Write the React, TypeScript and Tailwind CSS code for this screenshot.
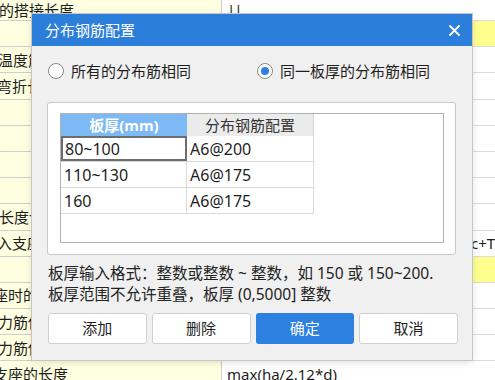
import React from "react";

const font = { fontFamily: '"Noto Sans", "Noto Sans CJK SC", sans-serif' };

type Row = { h: string; a?: string; aShift?: string; b?: React.ReactNode; hot?: boolean };

const rows: Row[] = [
  { h: "h-[21px]", a: "的搭接长度", aShift: "-ml-[1px]", b: <span className="ml-[5px] tracking-[-1px]">||</span> },
  { h: "h-[26.2px]", hot: true },
  { h: "h-[26.2px]", a: "温度筋", aShift: "-ml-[2px]" },
  { h: "h-[26.2px]", a: "弯折长", aShift: "-ml-[3px]" },
  { h: "h-[26.2px]" },
  { h: "h-[26.2px]" },
  { h: "h-[26.2px]" },
  { h: "h-[26.2px]" },
  { h: "h-[26.2px]", a: "长度计", aShift: "-ml-[1px]" },
  { h: "h-[26.2px]", a: "入支座", aShift: "-ml-[3px]", b: <span className="ml-[249px]">c+T</span> },
  { h: "h-[26.2px]", hot: true },
  { h: "h-[26.2px]", a: "座时的", aShift: "-ml-[7px]" },
  { h: "h-[26.2px]", a: "力筋伸", aShift: "-ml-[2px]" },
  { h: "h-[26.2px]", a: "力筋伸", aShift: "-ml-[2px]" },
  { h: "h-[26.2px]", a: "支座的长度", aShift: "-ml-[7px]", b: <span className="ml-[5px]">max(ha/2.12*d)</span> },
];

const table = [
  ["80~100", "A6@200"],
  ["110~130", "A6@175"],
  ["160", "A6@175"],
];

function Radio({ checked, label }: { checked?: boolean; label: string }) {
  return (
    <label className="flex items-center gap-[7px] h-[20px]">
      <span className="w-[16px] h-[16px] rounded-full border border-[#8a8a8a] bg-white flex items-center justify-center">
        {checked && <span className="w-[8px] h-[8px] rounded-full bg-[#2b80e0]" />}
      </span>
      <span className="text-[15px] text-[#1e1e1e] leading-[20px]">{label}</span>
    </label>
  );
}

export default function App() {
  return (
    <div className="relative w-[495px] h-[380px] overflow-hidden bg-white text-[#1e1e1e]" style={font}>
      {/* spreadsheet behind the dialog */}
      <div className="flex flex-col">
        {rows.map((r, i) => (
          <div key={i} className={`flex ${r.h} shrink-0`}>
            <div className="w-[222px] bg-[#ffffe1] border-b border-[#cfcfcf] border-r overflow-hidden whitespace-nowrap text-[15px] leading-[20px] flex items-center">
              {r.a && <span className={r.aShift}>{r.a}</span>}
            </div>
            <div
              className={`flex-1 border-b border-[#dcdcdc] overflow-hidden whitespace-nowrap text-[15px] flex items-center ${
                r.hot ? "bg-[#ffff8e]" : "bg-white"
              }`}
            >
              {r.b}
            </div>
          </div>
        ))}
      </div>

      {/* dialog */}
      <div className="absolute left-[32px] top-[14px] w-[440px] h-[346px] bg-[#f0f0f0] shadow-[0_0_0_1px_#c6c6c6,0_2px_8px_rgba(0,0,0,0.15)] flex flex-col">
        <div className="h-[32px] bg-[#2b7ed9] flex items-center justify-between pl-[13px] pr-[12px] text-white">
          <span className="text-[15px]">分布钢筋配置</span>
          <svg width="11" height="11" viewBox="0 0 11 11">
            <path d="M1 1L10 10M10 1L1 10" stroke="white" strokeWidth="1.8" strokeLinecap="round" />
          </svg>
        </div>

        <div className="flex h-[56px] pt-[15px] pl-[16px]">
          <div className="w-[209px]">
            <Radio label="所有的分布筋相同" />
          </div>
          <Radio checked label="同一板厚的分布筋相同" />
        </div>

        <div className="ml-[15px] mr-[16px] h-[153px] bg-white border border-[#c9c9c9] rounded-[3px] pl-[12px] pr-[11px] pt-[10px] pb-[11px]">
          <div className="h-full border border-[#b2b2b2] bg-white">
            <div className="w-[253px] text-[16px]">
              <div className="flex h-[22px] text-[15px]">
                <div className="w-[126px] bg-[#7db9f4] text-white font-bold flex items-center justify-center">
                  板厚(mm)
                </div>
                <div className="w-[127px] bg-[#ebebeb] border-r border-[#d4d4d4] text-[#333] flex items-center justify-center">
                  分布钢筋配置
                </div>
              </div>
              {table.map((row, i) => (
                <div key={i} className="flex h-[26px] border-b border-[#d9d9d9]">
                  <div
                    className={`w-[126px] flex items-center ${
                      i === 0 ? "border-2 border-[#6d6d6d] pl-[2px]" : "border-r border-[#d9d9d9] pl-[3px]"
                    }`}
                  >
                    {row[0]}
                  </div>
                  <div className="w-[127px] border-r border-[#d9d9d9] flex items-center pl-[3px]">{row[1]}</div>
                </div>
              ))}
            </div>
          </div>
        </div>

        <div className="mt-[8px] pl-[16px] text-[15.5px] leading-[21px] text-[#222]">
          <div>板厚输入格式：整数或整数 ~ 整数，如 150 或 150~200.</div>
          <div>板厚范围不允许重叠，板厚 (0,5000] 整数</div>
        </div>

        <div className="mt-[8px] ml-[16px] mr-[14px] grid grid-cols-4 gap-[5px] h-[31px] text-[15px]">
          <button className="bg-white border border-[#d0d0d0] rounded-[3px]">添加</button>
          <button className="bg-white border border-[#d0d0d0] rounded-[3px]">删除</button>
          <button className="bg-[#2b80e0] text-white rounded-[3px]">确定</button>
          <button className="bg-white border border-[#d0d0d0] rounded-[3px]">取消</button>
        </div>
      </div>
    </div>
  );
}
